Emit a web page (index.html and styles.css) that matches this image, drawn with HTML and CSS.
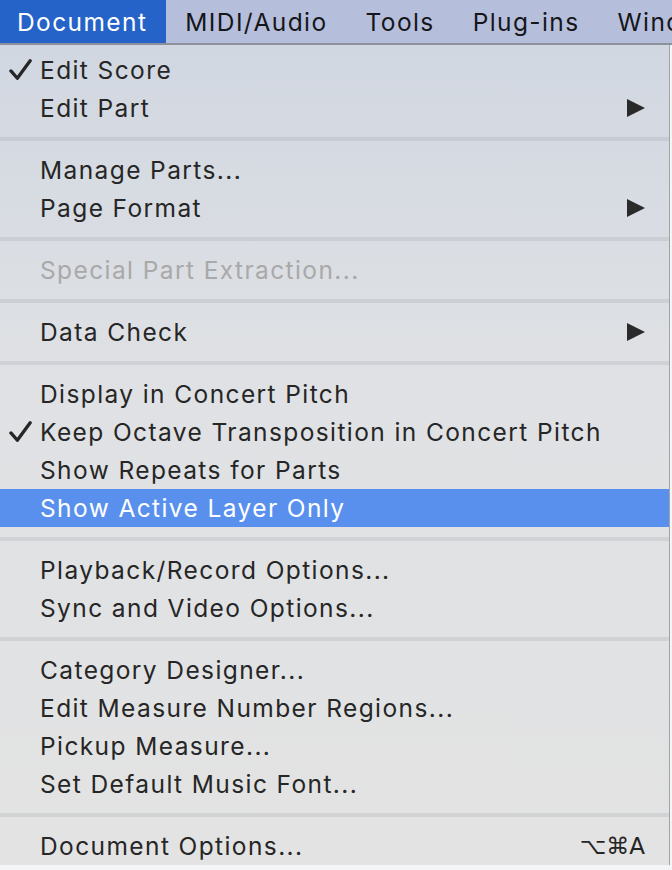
FILE: index.html
```html
<!DOCTYPE html>
<html lang="en">
<head>
  <meta charset="UTF-8">
  <title>Document menu</title>
  <link rel="stylesheet" href="styles.css">
</head>
<body>
  <div class="menubar">
    <span class="bar-item active">Document</span>
    <span class="bar-item">MIDI/Audio</span>
    <span class="bar-item">Tools</span>
    <span class="bar-item">Plug-ins</span>
    <span class="bar-item">Window</span>
  </div>
  <div class="menu">
    <div class="item"><svg class="check" viewBox="0 0 28 24"><path d="M3 13 L10 21 L24 2"/></svg>Edit Score</div>
    <div class="item">Edit Part<span class="arrow"></span></div>
    <div class="sep"></div>
    <div class="item">Manage Parts...</div>
    <div class="item">Page Format<span class="arrow"></span></div>
    <div class="sep"></div>
    <div class="item disabled">Special Part Extraction...</div>
    <div class="sep"></div>
    <div class="item">Data Check<span class="arrow"></span></div>
    <div class="sep"></div>
    <div class="item">Display in Concert Pitch</div>
    <div class="item"><svg class="check" viewBox="0 0 28 24"><path d="M3 13 L10 21 L24 2"/></svg>Keep Octave Transposition in Concert Pitch</div>
    <div class="item">Show Repeats for Parts</div>
    <div class="item selected">Show Active Layer Only</div>
    <div class="sep"></div>
    <div class="item">Playback/Record Options...</div>
    <div class="item">Sync and Video Options...</div>
    <div class="sep"></div>
    <div class="item">Category Designer...</div>
    <div class="item">Edit Measure Number Regions...</div>
    <div class="item">Pickup Measure...</div>
    <div class="item">Set Default Music Font...</div>
    <div class="sep"></div>
    <div class="item">Document Options...<span class="shortcut">⌥⌘A</span></div>
  </div>
</body>
</html>
```

FILE: styles.css
```css
body { margin: 0; background: #f4f5f7; font-family: Inter, "Open Sans", sans-serif; overflow: hidden; }
.menubar { display: flex; height: 43px; background: #b5bfdb; border-bottom: 2px solid #8c919b; white-space: nowrap; overflow: hidden; }
.bar-item { display: flex; align-items: center; padding: 0 19px; font-size: 24.5px; letter-spacing: 1.4px; color: #15151a; }
.bar-item:first-child { padding-left: 17px; }
.bar-item.active { background: #2563c9; color: #fff; }
.menu { width: 669px; padding-top: 6px; border-right: 1px solid #a2a4a8; background: linear-gradient(#d1d7e1, #dfe1e4 40%, #e3e3e3); }
.item { position: relative; display: flex; align-items: center; height: 38px; padding: 0 24px 0 40px; font-size: 24.5px; letter-spacing: 1.4px; color: #262626; white-space: nowrap; }
.item.disabled { color: #a9a9a9; }
.item.selected { background: #5990ee; color: #fff; }
.sep { height: 4px; margin: 10px 0; background: rgba(150, 155, 165, 0.22); }
.check { position: absolute; left: 8px; top: 8px; width: 26px; height: 22px; }
.check path { fill: none; stroke: #262626; stroke-width: 3.6; stroke-linecap: round; stroke-linejoin: round; }
.arrow { margin-left: auto; width: 0; height: 0; border-left: 18px solid #2a2a2a; border-top: 9px solid transparent; border-bottom: 9px solid transparent; }
.shortcut { margin-left: auto; font-family: "DejaVu Sans", sans-serif; font-size: 23px; letter-spacing: 0; }
```
